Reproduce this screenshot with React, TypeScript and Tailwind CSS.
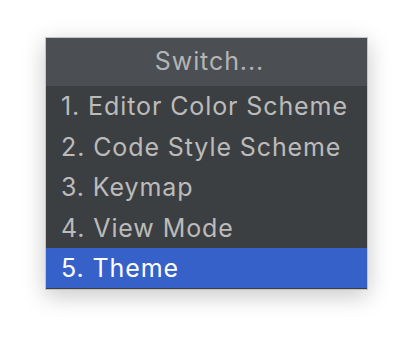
const items = [
  '1. Editor Color Scheme',
  '2. Code Style Scheme',
  '3. Keymap',
  '4. View Mode',
  '5. Theme',
];

export default function App() {
  const selected = 4;

  return (
    <div className="w-[414px] h-[344px] bg-white pt-[37px] pl-[45px]">
      <div
        className="w-[323px] border border-[#c4c4c4] bg-[#3c3f41] shadow-[0_6px_22px_rgba(0,0,0,0.22)]"
        style={{ fontFamily: 'Inter, "Noto Sans", sans-serif' }}
      >
        <div className="h-[48px] bg-[#4b4e52] flex items-center justify-center pl-[6px] text-[25px] tracking-[0.9px] text-[#b4b4b4]">
          Switch...
        </div>
        <div className="pb-[1px]">
          {items.map((label, i) => (
            <div
              key={label}
              className={
                i === selected
                  ? 'h-[40.4px] flex items-center pt-[2px] pl-[15px] text-[25px] tracking-[0.9px] bg-[#3661c9] text-white'
                  : 'h-[40.4px] flex items-center pt-[2px] pl-[15px] text-[25px] tracking-[0.9px] text-[#bbbbbb]'
              }
            >
              {label}
            </div>
          ))}
        </div>
      </div>
    </div>
  );
}
